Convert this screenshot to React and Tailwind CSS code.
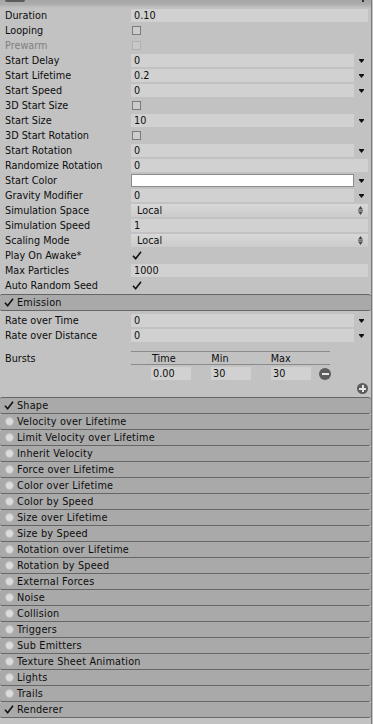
import React from 'react';

const Arrow = () => (
    <div className="w-[14px] h-full flex items-center justify-center">
        <svg width="5" height="4" viewBox="0 0 5 4">
            <rect x="0" y="0" width="5" height="1" fill="#111" />
            <polygon points="0,1 5,1 2.5,4" fill="#111" />
        </svg>
    </div>
);

const PopupArrows = () => (
    <svg width="5" height="9" viewBox="0 0 5 9" className="mr-[5px]">
        <polygon points="2.5,0 5,3.5 0,3.5" fill="#4a4a4a" />
        <rect x="0" y="4" width="5" height="1" fill="#7a7a7a" />
        <polygon points="0,5.5 5,5.5 2.5,9" fill="#4a4a4a" />
    </svg>
);

const Check = ({ className = '' }) => (
    <svg width="10" height="9" viewBox="0 0 10 9" className={className}>
        <path d="M1 4.8 L3.6 7.8 L9 0.8" stroke="#111" strokeWidth="1.6" fill="none" strokeLinejoin="round" />
    </svg>
);

const Box = ({ faded }) => (
    <div className={`w-[9px] h-[9px] ml-[1px] border ${faded ? 'border-[#b0b0b0] bg-[#c8c8c8]' : 'border-[#7b7b7b] bg-[#cdcdcd]'}`} />
);

const Field = ({ value, arrow }) => (
    <div className="flex items-center h-full">
        <div className={`${arrow ? 'w-[223px]' : 'w-[237px]'} h-[13px] bg-[#d1d1d1] flex items-center pl-[3px]`}>{value}</div>
        {arrow && <Arrow />}
    </div>
);

const Row = ({ label, children, faded }) => (
    <div className="flex items-center h-[15px]">
        <div className={`w-[131px] pl-[5px] whitespace-nowrap ${faded ? 'text-[#7f7f7f]' : ''}`}>{label}</div>
        {children}
    </div>
);

const Header = ({ title, on, first }) => (
    <div className={`flex items-center bg-[#a9a9a9] border-b border-[#666] rounded-r-[3px] rounded-l-[2px] ${first ? 'border-t h-[17px]' : 'h-[16px]'}`}>
        <div className="w-[17px] flex items-center justify-center pl-[1px]">
            {on ? <Check /> : <div className="w-[9px] h-[9px] rounded-full bg-[#dcdcdc] border border-[#bdbdbd]" />}
        </div>
        <span className="whitespace-nowrap tracking-[0.2px] pt-[1px]">{title}</span>
    </div>
);

const modules = [
    'Velocity over Lifetime',
    'Limit Velocity over Lifetime',
    'Inherit Velocity',
    'Force over Lifetime',
    'Color over Lifetime',
    'Color by Speed',
    'Size over Lifetime',
    'Size by Speed',
    'Rotation over Lifetime',
    'Rotation by Speed',
    'External Forces',
    'Noise',
    'Collision',
    'Triggers',
    'Sub Emitters',
    'Texture Sheet Animation',
    'Lights',
    'Trails',
];

export default function App() {
    return (
        <div className="w-[373px] h-[724px] bg-[#c2c2c2] overflow-hidden text-[9.7px] text-[#0d0d0d] font-['DejaVu_Sans',sans-serif] leading-none">
            <div className="w-[372px] h-full border-r border-[#7a7a7a]">
                {/* top strip */}
                <div className="h-[8px] bg-gradient-to-b from-[#a6a6a6] via-[#ababab] to-[#c2c2c2] relative">
                    <div className="absolute left-[5px] top-0 w-[20px] h-[2px] bg-[#5b5b5b] rounded-b-[2px]" />
                    <div className="absolute right-[7px] top-0 w-[2px] h-[2px] bg-[#333]" />
                </div>

                <Row label="Duration"><Field value="0.10" /></Row>
                <Row label="Looping"><Box /></Row>
                <Row label="Prewarm" faded><Box faded /></Row>
                <Row label="Start Delay"><Field value="0" arrow /></Row>
                <Row label="Start Lifetime"><Field value="0.2" arrow /></Row>
                <Row label="Start Speed"><Field value="0" arrow /></Row>
                <Row label="3D Start Size"><Box /></Row>
                <Row label="Start Size"><Field value="10" arrow /></Row>
                <Row label="3D Start Rotation"><Box /></Row>
                <Row label="Start Rotation"><Field value="0" arrow /></Row>
                <Row label="Randomize Rotation"><Field value="0" /></Row>
                <Row label="Start Color">
                    <div className="flex items-center h-full">
                        <div className="w-[223px] h-[13px] bg-white border border-[#8c8c8c]" />
                        <Arrow />
                    </div>
                </Row>
                <Row label="Gravity Modifier"><Field value="0" arrow /></Row>
                <Row label="Simulation Space">
                    <div className="w-[237px] h-[13px] bg-gradient-to-b from-[#d8d8d8] to-[#cbcbcb] flex items-center justify-between pl-[6px]">
                        <span>Local</span>
                        <PopupArrows />
                    </div>
                </Row>
                <Row label="Simulation Speed"><Field value="1" /></Row>
                <Row label="Scaling Mode">
                    <div className="w-[237px] h-[13px] bg-gradient-to-b from-[#d8d8d8] to-[#cbcbcb] flex items-center justify-between pl-[6px]">
                        <span>Local</span>
                        <PopupArrows />
                    </div>
                </Row>
                <Row label="Play On Awake*"><Check className="ml-[1px]" /></Row>
                <Row label="Max Particles"><Field value="1000" /></Row>
                <Row label="Auto Random Seed"><Check className="ml-[1px]" /></Row>
                <div className="h-[1px]" />

                <Header title="Emission" on first />
                <div className="h-[86px] pt-[2px]">
                    <Row label="Rate over Time"><Field value="0" arrow /></Row>
                    <Row label="Rate over Distance"><Field value="0" arrow /></Row>
                    <div className="flex mt-[8px]">
                        <div className="w-[131px] pl-[5px] h-[14px] flex items-center pt-[2px]">Bursts</div>
                        <div className="flex flex-col">
                            <div className="w-[199px] h-[14px] border-t border-b border-[#8a8a8a] flex items-center pl-[21px] pt-[1px]">
                                <span className="w-[60px]">Time</span>
                                <span className="w-[60px]">Min</span>
                                <span className="w-[60px]">Max</span>
                            </div>
                            <div className="flex items-center mt-[2px] pl-[20px]">
                                <div className="w-[60px]"><div className="w-[40px] h-[13px] bg-[#d1d1d1] flex items-center pl-[2px]">0.00</div></div>
                                <div className="w-[60px]"><div className="w-[40px] h-[13px] bg-[#d1d1d1] flex items-center pl-[2px]">30</div></div>
                                <div className="w-[48px]"><div className="w-[40px] h-[13px] bg-[#d1d1d1] flex items-center pl-[2px]">30</div></div>
                                <div className="w-[12px] h-[12px] rounded-full bg-[#5c5c5c] flex items-center justify-center">
                                    <div className="w-[7px] h-[2px] bg-[#e6e6e6]" />
                                </div>
                            </div>
                        </div>
                    </div>
                    <div className="flex justify-end pr-[3px] mt-[3px]">
                        <div className="w-[11px] h-[11px] rounded-full bg-[#5c5c5c] relative">
                            <div className="absolute left-[2px] top-[4.5px] w-[7px] h-[2px] bg-[#e6e6e6]" />
                            <div className="absolute left-[4.5px] top-[2px] w-[2px] h-[7px] bg-[#e6e6e6]" />
                        </div>
                    </div>
                </div>

                <Header title="Shape" on first />
                {modules.map((m) => (
                    <Header key={m} title={m} />
                ))}
                <Header title="Renderer" on />
            </div>
        </div>
    );
}
